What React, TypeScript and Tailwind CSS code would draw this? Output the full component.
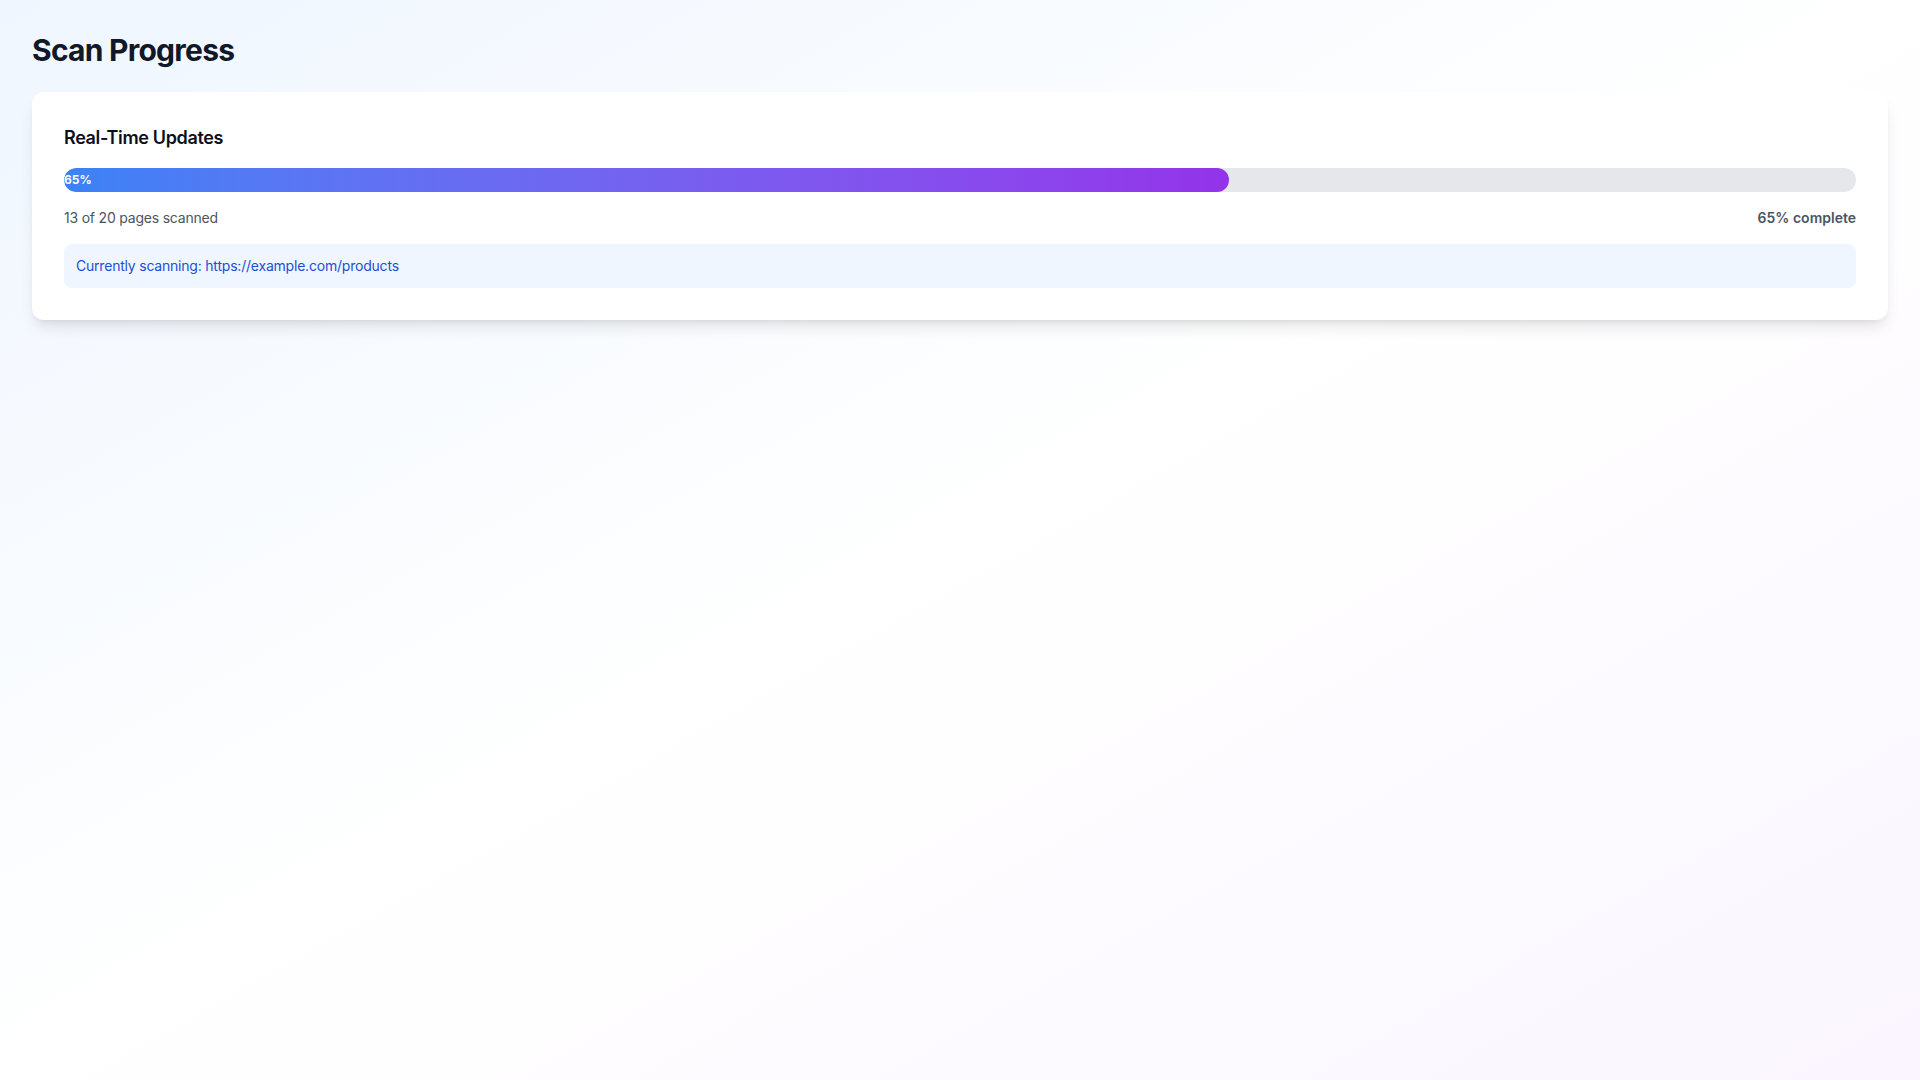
export default function App() {
  const scanned = 13;
  const total = 20;
  const percent = Math.round((scanned / total) * 100);

  return (
    <div
      className="min-h-screen bg-gradient-to-br from-[#eff6ff] via-white to-[#faf5ff] p-8 tracking-[-0.013em]"
      style={{ fontFamily: "Inter, 'Noto Sans', sans-serif" }}
    >
      <h1 className="text-3xl font-bold tracking-tight text-[#111827] mb-6">
        Scan Progress
      </h1>

      <div className="bg-white rounded-xl shadow-lg p-8">
        <h2 className="text-lg font-semibold tracking-[-0.02em] text-[#0b0f19] mb-4">
          Real-Time Updates
        </h2>

        <div className="w-full h-6 bg-[#e5e7eb] rounded-full overflow-hidden">
          <div
            className="h-full bg-gradient-to-r from-[#3b82f6] to-[#9333ea] rounded-full flex items-center text-xs font-bold tracking-normal text-white"
            style={{ width: `${percent}%` }}
          >
            {percent}%
          </div>
        </div>

        <div className="flex justify-between items-center mt-4 text-sm text-[#4b5563]">
          <span>
            {scanned} of {total} pages scanned
          </span>
          <span className="font-semibold tracking-normal">{percent}% complete</span>
        </div>

        <div className="mt-4 p-3 bg-[#eff6ff] rounded-lg text-sm text-[#1d4ed8]">
          Currently scanning: https://example.com/products
        </div>
      </div>
    </div>
  );
}
